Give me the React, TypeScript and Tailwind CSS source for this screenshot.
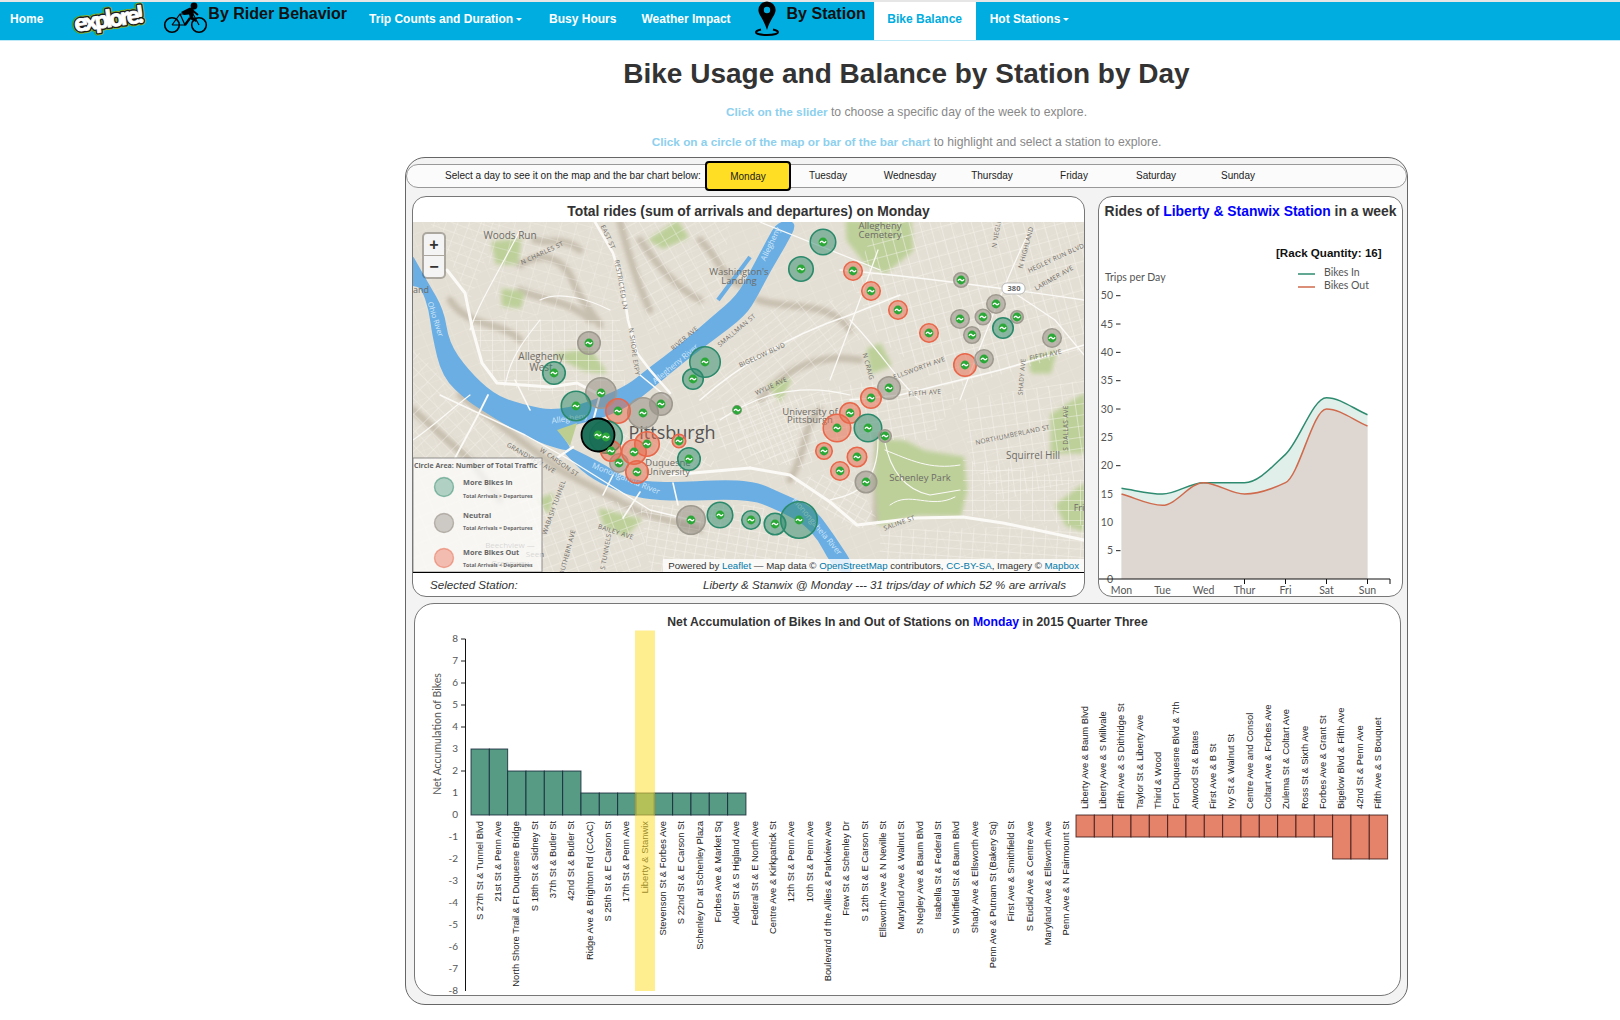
const sans = '"Liberation Sans", Arial, sans-serif'
const geo = 'Lato, "Liberation Sans", sans-serif'
const mapFont = '"Open Sans", "Liberation Sans", sans-serif'

const days = ['Monday', 'Tuesday', 'Wednesday', 'Thursday', 'Friday', 'Saturday', 'Sunday']

// kind: g = more in, n = neutral, r = more out
const stations: [number, number, number, string][] = [
  [589, 343, 12, 'n'], [554, 373, 12, 'g'], [705, 362, 16, 'g'], [693, 379, 11, 'g'], [601, 393, 16, 'n'],
  [823, 242, 13.5, 'g'], [801, 269, 13, 'g'], [853, 271, 10, 'r'], [871, 291, 10, 'r'], [898, 310, 10, 'r'],
  [929, 333, 10, 'r'], [965, 365, 12, 'r'], [984, 359, 10, 'n'], [961, 280, 8, 'n'], [996, 304, 10, 'n'],
  [960, 319, 10, 'n'], [983, 317, 8.5, 'n'], [1017, 317, 7, 'n'], [1003, 328, 11, 'g'], [972, 335, 9, 'n'],
  [1052, 338, 10, 'n'], [889, 388, 12, 'n'], [871, 398, 11, 'r'], [576, 406, 15.5, 'g'], [643, 413, 16, 'n'],
  [661, 404, 12, 'n'], [618, 411, 13, 'r'], [737, 410, 5, 'n'], [606, 437, 17, 'g'], [619, 463, 10, 'n'],
  [611, 451, 11, 'r'], [634, 452, 13, 'r'], [647, 444, 13, 'r'], [637, 472, 12, 'r'], [679, 441, 7.5, 'r'],
  [689, 459, 12, 'g'], [691, 520, 15, 'n'], [720, 515, 13.5, 'g'], [751, 520, 10, 'g'], [775, 524, 11.5, 'g'],
  [799, 520, 19, 'g'], [850, 413, 11, 'r'], [837, 428, 14.5, 'r'], [868, 428, 14.5, 'g'], [885, 436, 7, 'n'],
  [824, 451, 9, 'r'], [857, 457, 10.5, 'r'], [840, 471, 10, 'r'], [866, 482, 11.5, 'n'],
]

const stationStyle: Record<string, { fill: string; stroke: string }> = {
  g: { fill: '#2b8a6b', stroke: '#2b8a6b' },
  n: { fill: '#8d887e', stroke: '#9f9a90' },
  r: { fill: '#e8674a', stroke: '#e8674a' },
}

const blocks: { pts: string; rot: number; w: number; h: number; op?: number }[] = [
  { pts: '470,320 620,320 625,385 560,395 495,385', rot: 0, w: 12, h: 10 },
  { pts: '480,222 600,222 640,300 500,320', rot: 15, w: 15, h: 11, op: 0.55 },
  { pts: '620,222 730,222 720,300 650,340 640,280', rot: -30, w: 13, h: 10, op: 0.7 },
  { pts: '690,395 780,300 850,300 860,340 760,410', rot: -38, w: 26, h: 7, op: 0.7 },
  { pts: '700,410 830,390 810,470 690,440', rot: -20, w: 11, h: 9 },
  { pts: '850,280 880,222 1084,222 1084,350 950,390 880,340', rot: -15, w: 10, h: 14 },
  { pts: '960,400 1084,380 1084,480 1000,500 970,460', rot: -8, w: 12, h: 11 },
  { pts: '820,390 880,380 960,395 930,440 880,440 820,440', rot: -10, w: 11, h: 9 },
  { pts: '880,530 1084,525 1084,572 880,572', rot: 4, w: 12, h: 8 },
  { pts: '640,505 760,505 830,572 650,572', rot: 10, w: 10, h: 8 },
  { pts: '570,490 650,510 640,572 540,572 520,500', rot: -20, w: 12, h: 10, op: 0.8 },
  { pts: '600,430 680,440 720,465 650,478 610,460', rot: 30, w: 8, h: 8 },
  { pts: '413,345 460,400 540,460 413,460', rot: 45, w: 13, h: 11, op: 0.7 },
  { pts: '430,222 500,222 470,300', rot: 20, w: 11, h: 9, op: 0.7 },
  { pts: '790,480 850,470 880,525 850,530', rot: 30, w: 10, h: 9 },
  { pts: '963,460 1084,480 1084,525 963,515', rot: 0, w: 12, h: 10 },
  { pts: '735,400 800,395 795,465 740,465', rot: -25, w: 12, h: 10, op: 0.8 },
]

const greens = [
  '878,440 905,442 925,452 963,458 966,490 960,515 917,514 880,524 876,480',
  '847,222 910,222 912,250 885,272 866,263 848,240',
  '1057,505 1084,485 1084,530 1067,525',
  '1052,415 1084,395 1084,452 1052,452',
  '493,243 520,240 517,263 497,263',
  '650,240 677,222 687,237 663,247',
  '503,290 523,293 520,307 503,305',
  '555,355 590,350 605,372 585,370',
  '868,350 880,345 890,365 872,372',
  '770,385 790,380 780,400',
  '1030,360 1055,352 1050,372 1032,372',
  '540,500 552,495 548,512',
  '600,510 640,520 625,535 605,525',
]

const roads: [string, number][] = [
  ['M447 270L465 293L472 327L482 363L497 383L550 387L577 383L600 395', 3],
  ['M595 222L613 253L623 287L628 320L637 353L650 370L670 393', 2.6],
  ['M700 400C740 365 790 335 850 315L900 295', 1.6],
  ['M850 400L900 395L1000 370L1084 345', 1.6],
  ['M750 468L790 475L830 502L857 525L917 518L963 517L1003 523L1084 540', 3],
  ['M670 475L750 468', 3],
  ['M440 395L525 435L570 460L650 510L700 522', 1.4],
  ['M557 458L573 447', 2.4],
  ['M603 495L613 475', 1.6],
  ['M623 518L640 492', 1.6],
  ['M678 505L673 483', 1.6],
  ['M668 398L640 375', 1.6],
  ['M515 380L530 410', 1.6],
  ['M600 395L592 425L610 445', 2],
  ['M840 270C900 275 980 285 1084 300', 1.3],
  ['M878 250C860 300 845 340 830 380', 1.3],
  ['M850 320C880 350 900 385 920 400', 1.2],
  ['M1030 230C1010 270 990 320 960 400', 1.2],
  ['M1010 290L1055 320L1084 355', 1.2],
  ['M885 442C890 470 905 490 930 495L960 490', 1.2],
  ['M885 450C910 460 930 470 960 465', 1],
  ['M890 505C910 490 930 510 955 497', 1],
  ['M830 500C850 495 878 490 878 440', 1.2],
  ['M760 222L880 270', 1.2],
  ['M413 440C435 425 450 410 470 395', 1.2],
  ['M488 395L478 415L455 458', 1.8],
  ['M720 420C750 400 790 380 850 395', 1.2],
  ['M520 230C500 270 480 300 470 330', 1.2],
  ['M540 300C560 290 590 300 610 310', 1.2],
  ['M540 320C520 345 510 360 505 385', 1.2],
]

const hills = [
  'M520 265C545 250 560 260 570 275C580 300 590 310 600 325',
  'M640 240C660 270 680 290 700 300',
  'M460 395L560 470L640 512L700 530',
  'M413 410L470 460L500 500',
  'M758 300C790 310 830 300 850 330',
  'M790 480C810 445 800 430 820 410',
  'M878 440L876 520',
  'M620 222C630 260 640 290 650 310',
  'M520 290C540 300 570 300 590 320',
  'M450 300C470 330 500 320 520 340',
  'M700 240C720 260 725 280 740 285',
  'M760 400C790 360 830 355 860 360',
  'M535 240C550 245 560 235 580 250',
]

const mapLabels: [string, number, number, number, number, string?][] = [
  ['Woods Run', 510, 239, 0, 10], ['N CHARLES ST', 543, 255, -25, 6.5], ['EAST ST', 606, 238, 65, 6.5],
  ['RESTRICTED LN', 619, 285, 80, 6.5], ['N SHORE EXPY', 632, 352, 82, 6.5], ['RIVER AVE', 686, 340, -40, 6.5],
  ['SMALLMAN ST', 738, 332, -40, 6.5], ['Allegheny', 541, 360, 0, 10], ['West', 541, 371, 0, 10],
  ['and', 421, 293, 0, 9], ['Washington\'s', 739, 275, 0, 9.5], ['Landing', 739, 284, 0, 9.5],
  ['Allegheny', 880, 229, 0, 9.5], ['Cemetery', 880, 238, 0, 9.5], ['N NEGLEY', 999, 232, -80, 6.5],
  ['N HIGHLAND', 1028, 248, -75, 6.5], ['HEGLEY RUN BLVD', 1057, 260, -25, 6.5], ['LARIMER AVE', 1055, 280, -30, 6.5],
  ['N CRAIG', 866, 367, 75, 6.5], ['ELLSWORTH AVE', 920, 370, -20, 6.5], ['FIFTH AVE', 925, 395, -5, 6.5],
  ['FIFTH AVE', 1046, 357, -12, 6.5], ['SHADY AVE', 1024, 377, -85, 6.5], ['BIGELOW BLVD', 763, 357, -25, 6.5],
  ['WYLIE AVE', 772, 388, -25, 6.5], ['Duquesne', 668, 466, 0, 9.5], ['University', 668, 475, 0, 9.5],
  ['University of', 810, 415, 0, 9.5], ['Pittsburgh', 810, 423, 0, 9.5], ['NORTHUMBERLAND ST', 1013, 437, -12, 6.5],
  ['S DALLAS AVE', 1068, 428, -90, 6.5], ['Squirrel Hill', 1033, 459, 0, 10], ['Schenley Park', 920, 481, 0, 9.5],
  ['SALINE ST', 900, 525, -20, 6.5], ['Fri', 1079, 511, 0, 9], ['GRANDVIEW AVE', 530, 460, 30, 6.5],
  ['W CARSON ST', 558, 464, 35, 6.5], ['BAILEY AVE', 615, 534, 18, 6.5], ['WABASH TUNNEL', 556, 508, -70, 6.5],
  ['SOUTHERN AVE', 569, 555, -75, 6.5], ['S TUNNELS', 608, 552, -80, 6.5],
  ['Beechview —', 510, 548, 0, 8], ['Seen', 535, 557, 0, 8], ['Greenway', 510, 566, 0, 8],
  ['Ohio River', 433, 320, 72, 7.5, '#d4e8f8'], ['Allegheny River', 677, 366, -40, 8, '#d4e8f8'],
  ['Allegheny', 773, 245, -65, 8, '#d4e8f8'], ['Allegheny', 570, 421, -8, 8, '#d4e8f8'],
  ['Monongahela River', 625, 481, 22, 8, '#d4e8f8'], ['Monongahela River', 815, 528, 50, 8, '#d4e8f8'],
]

// rounds the corners of a river outline
function smooth(pts: number[][]) {
  let d = `M${pts[0][0]} ${pts[0][1]}`
  for (let i = 1; i < pts.length - 1; i++) {
    const mx = (pts[i][0] + pts[i + 1][0]) / 2
    const my = (pts[i][1] + pts[i + 1][1]) / 2
    d += `Q${pts[i][0]} ${pts[i][1]} ${mx} ${my}`
  }
  const last = pts[pts.length - 1]
  return `${d}L${last[0]} ${last[1]}Z`
}

const ohioAllegheny = smooth([
  [413, 258], [427, 283], [443, 310], [448, 343], [467, 370], [493, 395], [520, 405], [560, 413], [623, 390], [650, 368],
  [680, 346], [712, 318], [738, 296], [752, 270], [768, 240], [778, 222], [797, 222], [785, 245], [770, 270], [757, 295],
  [745, 315], [712, 340], [685, 360], [655, 385], [630, 405], [600, 418], [577, 423], [557, 430], [570, 448], [567, 450],
  [540, 442], [507, 425], [480, 408], [468, 400], [443, 377], [433, 335], [430, 310], [422, 287], [413, 285],
])
const monongahela = smooth([
  [573, 450], [600, 463], [627, 480], [653, 483], [677, 483], [750, 480], [783, 495], [813, 508], [833, 535], [857, 572],
  [836, 572], [813, 528], [780, 510], [750, 498], [677, 500], [643, 498], [617, 490], [587, 475], [565, 452],
])

function MapDrawing() {
  return (
    <svg viewBox="413 222 671 350" width={671} height={350} className="block">
      <defs>
        <filter id="soft" x="-5%" y="-5%" width="110%" height="110%">
          <feGaussianBlur stdDeviation={2.2} />
        </filter>
        <filter id="tile" x="0" y="0" width="100%" height="100%">
          <feGaussianBlur stdDeviation={0.35} />
        </filter>
        <pattern id="baseGrid" width={14} height={12} patternUnits="userSpaceOnUse" patternTransform="rotate(-22)">
          <path d="M0 0H14M0 0V12" stroke="#f5f3ee" strokeWidth={1} fill="none" />
        </pattern>
        {blocks.map((b, i) => (
          <pattern
            key={i}
            id={`blocks${i}`}
            width={b.w}
            height={b.h}
            patternUnits="userSpaceOnUse"
            patternTransform={`rotate(${b.rot})`}
          >
            <path d={`M0 0H${b.w}M0 0V${b.h}`} stroke="#f7f5f0" strokeWidth={1.1} fill="none" />
          </pattern>
        ))}
      </defs>
      <g filter="url(#tile)">
        <rect x={413} y={222} width={671} height={350} fill="#e4dfd4" />
        <rect x={413} y={222} width={671} height={350} fill="url(#baseGrid)" opacity={0.35} />
        <g filter="url(#soft)">
          {hills.map(d => (
            <path key={d} d={d} fill="none" stroke="#c6beae" strokeWidth={7} strokeLinecap="round" />
          ))}
          {greens.map(p => (
            <polygon key={p} points={p} fill="#bdd09a" stroke="#bdd09a" strokeWidth={3} strokeLinejoin="round" />
          ))}
        </g>
        {blocks.map((b, i) => (
          <polygon key={i} points={b.pts} fill={`url(#blocks${i})`} opacity={b.op ?? 0.9} />
        ))}
        {/* rivers */}
        <g fill="#6aaee4" stroke="#6aaee4" strokeWidth={2} strokeLinejoin="round">
          <path d={ohioAllegheny} />
          <path d={monongahela} />
          <path d="M718 300L750 257" strokeWidth={4} fill="none" />
        </g>
        <polygon points="557,430 577,423 570,446" fill="#bccf91" />
        {roads.map(([d, w]) => (
          <path key={d} d={d} fill="none" stroke="#fbfaf7" strokeWidth={w} strokeLinejoin="round" strokeLinecap="round" />
        ))}
      </g>
      <rect x={1002} y={283} width={23} height={11} rx={5} fill="#fff" stroke="#aaa" strokeWidth={0.8} />
      <text x={1014} y={291} fontSize={7.5} fontWeight={700} fill="#666" textAnchor="middle" fontFamily={mapFont}>380</text>
      {mapLabels.map(([t, x, y, rot, size, color], i) => (
        <text
          key={i}
          x={x}
          y={y}
          fontSize={size}
          fill={color ?? '#6e6b66'}
          fontFamily={mapFont}
          textAnchor="middle"
          letterSpacing={size < 7 ? 0.3 : 0}
          transform={rot ? `rotate(${rot} ${x} ${y})` : undefined}
        >
          {t}
        </text>
      ))}
      <text x={672} y={439} fontSize={18} fill="#555" textAnchor="middle" fontFamily={mapFont}>Pittsburgh</text>
      {stations.map(([x, y, r, k], i) => (
        <circle key={i} cx={x} cy={y} r={r - 0.75} fill={stationStyle[k].fill} fillOpacity={0.5} stroke={stationStyle[k].stroke} strokeWidth={1.6} />
      ))}
      <circle cx={598} cy={435} r={16.5} fill="#146b52" fillOpacity={0.95} stroke="#000" strokeWidth={1.8} />
      {[...stations, [598, 435, 17, 'g'] as [number, number, number, string]].map(([x, y, r], i) => (
        <g key={i}>
          <circle cx={x} cy={y} r={Math.min(4.4, r - 0.5)} fill="#2ca838" />
          <path d={`M${x - 3} ${y + 0.8}q1.4 -2.6 3 -0.8t3 -0.8`} fill="none" stroke="#fff" strokeWidth={1.3} />
        </g>
      ))}
      {/* legend */}
      <rect x={413} y={458} width={129} height={114} fill="#fff" fillOpacity={0.72} stroke="#777" strokeWidth={0.8} />
      <g fontFamily={mapFont} fill="#666" fontWeight={700}>
        <text x={414} y={468} fontSize={7}>Circle Area: Number of Total Traffic</text>
        <text x={463} y={485} fontSize={7.3}>More Bikes In</text>
        <text x={463} y={498} fontSize={5.2}>Total Arrivals &gt; Departures</text>
        <text x={463} y={518} fontSize={7.3}>Neutral</text>
        <text x={463} y={530} fontSize={5.2}>Total Arrivals = Departures</text>
        <text x={463} y={555} fontSize={7.3}>More Bikes Out</text>
        <text x={463} y={567} fontSize={5.2}>Total Arrivals &lt; Departures</text>
      </g>
      <circle cx={444} cy={487} r={9.5} fill="#2b8a6b" fillOpacity={0.35} stroke="#2b8a6b" strokeOpacity={0.5} strokeWidth={1.4} />
      <circle cx={444} cy={523} r={9.5} fill="#8d887e" fillOpacity={0.4} stroke="#9f9a90" strokeOpacity={0.7} strokeWidth={1.4} />
      <circle cx={444} cy={558} r={9.5} fill="#e8674a" fillOpacity={0.4} stroke="#e8674a" strokeOpacity={0.5} strokeWidth={1.4} />
    </svg>
  )
}

function monotonePath(xs: number[], ys: number[]) {
  const n = xs.length
  const d: number[] = []
  for (let i = 0; i < n - 1; i++) d.push((ys[i + 1] - ys[i]) / (xs[i + 1] - xs[i]))
  const m = xs.map((_, i) => {
    if (i === 0) return d[0]
    if (i === n - 1) return d[n - 2]
    if (d[i - 1] * d[i] <= 0) return 0
    return (2 * d[i - 1] * d[i]) / (d[i - 1] + d[i])
  })
  let path = `M${xs[0]} ${ys[0]}`
  for (let i = 0; i < n - 1; i++) {
    const h = (xs[i + 1] - xs[i]) / 3
    path += `C${xs[i] + h} ${ys[i] + m[i] * h} ${xs[i + 1] - h} ${ys[i + 1] - m[i + 1] * h} ${xs[i + 1]} ${ys[i + 1]}`
  }
  return path
}

function LineChart() {
  const xs = days.map((_, i) => 1121.5 + 41 * i)
  const y = (v: number) => 579 - 5.666 * v
  const bikesIn = [16, 15, 17, 17, 22, 32, 29].map(y)
  const bikesOut = [15, 13, 17, 15, 17, 30, 27].map(y)
  const lineIn = monotonePath(xs, bikesIn)
  const lineOut = monotonePath(xs, bikesOut)
  const close = `L${xs[6]} 579L${xs[0]} 579Z`
  return (
    <svg viewBox="1099 223 303 373" width={303} height={373} className="block">
      <path d={lineIn + close} fill="#2e8b6f" fillOpacity={0.14} />
      <path d={lineOut + close} fill="#ded6d1" />
      <path d={lineIn} fill="none" stroke="#2e8b6f" strokeWidth={1.5} />
      <path d={lineOut} fill="none" stroke="#cf6a4c" strokeWidth={1.5} />
      <text x={1276} y={257} fontSize={11.6} fontWeight={700} fill="#111" fontFamily={sans}>[Rack Quantity: 16]</text>
      <g fontFamily={geo} fill="#555" fontSize={10.5}>
        <text x={1105} y={281}>Trips per Day</text>
        <text x={1324} y={276}>Bikes In</text>
        <text x={1324} y={289}>Bikes Out</text>
        {[50, 45, 40, 35, 30, 25, 20, 15, 10, 5, 0].map(v => (
          <text key={v} x={1113} y={y(v) + 3.5} textAnchor="end">{v}</text>
        ))}
        {['Mon', 'Tue', 'Wed', 'Thur', 'Fri', 'Sat', 'Sun'].map((d, i) => (
          <text key={d} x={xs[i]} y={594} textAnchor="middle">{d}</text>
        ))}
      </g>
      <path d="M1298 274H1315" stroke="#2e8b6f" strokeWidth={1.5} />
      <path d="M1298 287H1315" stroke="#cf6a4c" strokeWidth={1.5} />
      {[50, 45, 40, 35, 30, 20, 5].map(v => (
        <path key={v} d={`M1116 ${y(v)}H1120.5`} stroke="#222" />
      ))}
      <path d="M1099 579H1390" stroke="#111" />
      {[xs[3], xs[4], xs[5], xs[6], 1390].map(x => (
        <path key={x} d={`M${x} 579V584`} stroke="#111" />
      ))}
    </svg>
  )
}

const positive = [
  'S 27th St & Tunnel Blvd', '21st St & Penn Ave', 'North Shore Trail & Ft Duquesne Bridge', 'S 18th St & Sidney St',
  '37th St & Butler St', '42nd St & Butler St', 'Ridge Ave & Brighton Rd (CCAC)', 'S 25th St & E Carson St',
  '17th St & Penn Ave', 'Liberty & Stanwix', 'Stevenson St & Forbes Ave', 'S 22nd St & E Carson St',
  'Schenley Dr at Schenley Plaza', 'Forbes Ave & Market Sq', 'Alder St & S Higland Ave', 'Federal St & E North Ave',
  'Centre Ave & Kirkpatrick St', '12th St & Penn Ave', '10th St & Penn Ave', 'Boulevard of the Allies & Parkview Ave',
  'Frew St & Schenley Dr', 'S 12th St & E Carson St', 'Ellsworth Ave & N Neville St', 'Maryland Ave & Walnut St',
  'S Negley Ave & Baum Blvd', 'Isabella St & Federal St', 'S Whitfield St & Baum Blvd', 'Shady Ave & Ellsworth Ave',
  'Penn Ave & Putnam St (Bakery Sq)', 'First Ave & Smithfield St', 'S Euclid Ave & Centre Ave',
  'Maryland Ave & Ellsworth Ave', 'Penn Ave & N Fairmount St',
]
const negative = [
  'Liberty Ave & Baum Blvd', 'Liberty Ave & S Millvale', 'Fifth Ave & S Dithridge St', 'Taylor St & Liberty Ave',
  'Third & Wood', 'Fort Duquesne Blvd & 7th', 'Atwood St & Bates', 'First Ave & B St', 'Ivy St & Walnut St',
  'Centre Ave and Consol', 'Coltart Ave & Forbes Ave', 'Zulema St & Coltart Ave', 'Ross St & Sixth Ave',
  'Forbes Ave & Grant St', 'Bigelow Blvd & Fifth Ave', '42nd St & Penn Ave', 'Fifth Ave & S Bouquet',
]
const posValues = [3, 3, 2, 2, 2, 2, 1, 1, 1, 1, 1, 1, 1, 1, 1]
const step = 18.33
const zero = 815

function BarChart() {
  return (
    <svg viewBox="415 630 985 365" width={985} height={365} className="block">
      {Array.from({ length: 17 }, (_, i) => 8 - i).map(v => (
        <text key={v} x={458} y={zero - v * 22 + 2.5} textAnchor="end" fontSize={10} fontFamily={geo} fill="#555">{v}</text>
      ))}
      {[8, 7, 6, 5, 4, 2].map(v => (
        <path key={v} d={`M461 ${zero - v * 22}H465.5`} stroke="#222" />
      ))}
      <path d="M465.5 639V991" stroke="#111" />
      <text
        x={441}
        y={734}
        fontSize={10.5}
        fontFamily={geo}
        fill="#555"
        textAnchor="middle"
        transform="rotate(-90 441 734)"
      >
        Net Accumulation of Bikes
      </text>
      {posValues.map((v, i) => (
        <rect key={i} x={471 + i * step} y={zero - v * 22} width={step} height={v * 22} fill="#579b85" stroke="#123" strokeOpacity={0.8} />
      ))}
      {negative.map((_, i) => (
        <rect key={i} x={1076 + i * step} y={zero} width={step} height={i >= 14 ? 44 : 22} fill="#e5826a" stroke="#311" strokeOpacity={0.8} />
      ))}
      <g fontFamily={sans} fontSize={9.4} fill="#222">
        {positive.map((t, i) => {
          const x = 471 + i * step + step / 2 + 2.5
          return (
            <text key={t} x={x} y={821} textAnchor="end" transform={`rotate(-90 ${x} 821)`}>{t}</text>
          )
        })}
        {negative.map((t, i) => {
          const x = 1076 + i * step + step / 2 + 2.5
          return (
            <text key={t} x={x} y={809} transform={`rotate(-90 ${x} 809)`}>{t}</text>
          )
        })}
      </g>
      <rect x={635} y={630.5} width={20} height={360.5} fill="#ffe033" fillOpacity={0.55} />
    </svg>
  )
}

function ExploreLogo() {
  return (
    <svg width={84} height={36} viewBox="0 0 84 36" className="shrink-0">
      <g transform="rotate(-8 42 18)" fontFamily={geo} fontWeight={900} fontSize={24} strokeLinejoin="round">
        <text x={7} y={26} fill="none" stroke="#7fae2c" strokeWidth={5.4} textLength={70}>explore!</text>
        <text x={7} y={26} fill="none" stroke="#1c1c1c" strokeWidth={3.6} textLength={70}>explore!</text>
        <text x={7} y={26} fill="#fff" stroke="#fff" strokeWidth={0.8} textLength={70}>explore!</text>
      </g>
    </svg>
  )
}

function BikeIcon() {
  return (
    <svg width={45} height={36} viewBox="0 0 45 36" className="shrink-0">
      <g fill="none" stroke="#000" strokeWidth={1.6}>
        <circle cx={9} cy={25} r={7.3} />
        <circle cx={36} cy={25} r={7.3} />
        <path d="M9 25L17 14L30 14L36 25M17 14L22 25L30 14M22 25H9" strokeWidth={1.2} />
      </g>
      <circle cx={31} cy={6} r={3.4} />
      <path d="M18 12L26 8C29 7 31 9 31 11L30 17L34 20L33 22L27 19L26 14L21 15Z" />
      <path d="M27 18L22 25" stroke="#000" strokeWidth={2.4} />
      <path d="M29 10L35 15" stroke="#000" strokeWidth={2} />
    </svg>
  )
}

function PinIcon() {
  return (
    <svg width={26} height={38} viewBox="0 0 26 38" className="shrink-0">
      <path fillRule="evenodd" d="M13 1.5a8.6 8.6 0 0 1 8.6 8.6c0 5-5.5 9-8.6 20c-3.1-11-8.6-15-8.6-20A8.6 8.6 0 0 1 13 1.5ZM13 6.8a3.2 3.2 0 1 0 0 6.4a3.2 3.2 0 0 0 0-6.4Z" />
      <path d="M7 29.5C3.5 30.3 2 31.2 2 32.3C2 34 7 35 13 35S24 34 24 32.3C24 31.2 22.5 30.3 19 29.5" fill="none" stroke="#000" strokeWidth={2} />
    </svg>
  )
}

function Caret() {
  return <span className="ml-[3px] inline-block border-x-[3px] border-t-[3px] border-x-transparent border-t-white align-middle" />
}

const navLink = 'mb-[4px] text-[12px] font-bold text-white whitespace-nowrap'
const navHead = 'mb-[14px] text-[16px] leading-[18px] font-bold text-[#111] whitespace-nowrap'

function Nav() {
  return (
    <nav className="flex h-[41px] items-center border-t-2 border-b border-t-[#e6e6e6] border-b-[#bfe9f6] bg-[#00ade0]">
      <a className={`${navLink} ml-[10px]`}>Home</a>
      <div className="mb-[4px] ml-[24px]"><ExploreLogo /></div>
      <div className="mb-[6px] ml-[12px]"><BikeIcon /></div>
      <a className={navHead}>By Rider Behavior</a>
      <a className={`${navLink} ml-[22px]`}>Trip Counts and Duration<Caret /></a>
      <a className={`${navLink} ml-[27px]`}>Busy Hours</a>
      <a className={`${navLink} ml-[25px]`}>Weather Impact</a>
      <div className="mb-[4px] ml-[23px]"><PinIcon /></div>
      <a className={`${navHead} ml-[7px]`}>By Station</a>
      <a className="ml-[8px] flex h-full w-[102px] items-center justify-center bg-white pb-[4px] text-[12px] font-bold whitespace-nowrap text-[#00ade0]">Bike Balance</a>
      <a className={`${navLink} ml-[14px]`}>Hot Stations<Caret /></a>
    </nav>
  )
}

function Attribution() {
  const link = 'text-[#0078a8]'
  return (
    <div className="absolute right-0 bottom-0 bg-white/80 px-[5px] text-[9.7px] leading-[13px] whitespace-nowrap text-[#333]">
      Powered by <a className={link}>Leaflet</a> — Map data © <a className={link}>OpenStreetMap</a> contributors,{' '}
      <a className={link}>CC-BY-SA</a>, Imagery © <a className={link}>Mapbox</a>
    </div>
  )
}

function ZoomControl() {
  return (
    <div className="absolute top-[10px] left-[9px] flex w-[24px] flex-col gap-[1px] rounded-[5px] bg-black/25 p-[2px]">
      <div className="flex h-[21px] items-center justify-center rounded-t-[3px] bg-[#f4f4f4] text-[16px] leading-none font-bold text-[#333]">+</div>
      <div className="flex h-[21px] items-center justify-center rounded-b-[3px] bg-[#f4f4f4] text-[16px] leading-none font-bold text-[#333]">−</div>
    </div>
  )
}

export default function App() {
  return (
    <div className="w-[1620px] bg-white text-[#333]" style={{ fontFamily: sans }}>
      <Nav />
      <h1 className="mt-[17px] ml-[405px] w-[1003px] text-center text-[28px] leading-[32px] font-bold text-[#333]">
        Bike Usage and Balance by Station by Day
      </h1>
      <p className="mt-[14px] ml-[405px] w-[1003px] text-center text-[12.2px] leading-[16px] text-[#888]">
        <span className="text-[11.8px] font-bold text-[#8dd0ee]">Click on the slider</span> to choose a specific day of the week to explore.
      </p>
      <p className="mt-[14px] ml-[405px] w-[1003px] text-center text-[12.2px] leading-[16px] text-[#888]">
        <span className="text-[11.8px] font-bold text-[#8dd0ee]">Click on a circle of the map or bar of the bar chart</span> to highlight and select a station to explore.
      </p>
      <main className="mt-[7px] ml-[405px] w-[1003px] rounded-[20px] border border-[#666] bg-[#f3f3f3] pt-[6px] pb-[8px]">
        <div className="flex h-[24px] items-center rounded-[12px] border border-[#999] bg-[#fbfbfb] pb-[1px] pl-[38px] text-[10px]">
          <span className="w-[260px] whitespace-nowrap text-[#222]">Select a day to see it on the map and the bar chart below:</span>
          {days.map((d, i) =>
            i === 0 ? (
              <button key={d} className="mt-[1px] mr-[-4px] h-[30px] w-[86px] shrink-0 rounded-[4px] border-2 border-black bg-[#ffde23] text-[10px] text-[#222]">{d}</button>
            ) : (
              <button key={d} className="w-[82px] shrink-0 text-[10px] text-[#222]">{d}</button>
            )
          )}
        </div>
        <div className="mt-[8px] ml-[6px] flex gap-[13px]">
          <section className="w-[673px] overflow-hidden rounded-[14px] border border-[#777] bg-white">
            <h2 className="flex h-[25px] items-center justify-center pt-[3px] text-[13.9px] font-bold text-[#333]">
              Total rides (sum of arrivals and departures) on Monday
            </h2>
            <div className="relative h-[350px]">
              <MapDrawing />
              <ZoomControl />
              <Attribution />
            </div>
            <div className="flex h-[23px] items-center justify-between border-t border-black pt-[1px] pr-[18px] pl-[17px] text-[11.6px] text-[#333] italic">
              <span>Selected Station:</span>
              <span>Liberty &amp; Stanwix @ Monday --- 31 trips/day of which 52 % are arrivals</span>
            </div>
          </section>
          <section className="w-[305px] overflow-hidden rounded-[14px] border border-[#777] bg-white">
            <h2 className="flex h-[26px] items-center justify-center pt-[3px] text-[13.9px] font-bold whitespace-nowrap text-[#333]">
              Rides of&nbsp;<span className="text-[#0000ff]">Liberty &amp; Stanwix Station</span>&nbsp;in a week
            </h2>
            <LineChart />
          </section>
        </div>
        <section className="mt-[6px] ml-[8px] w-[987px] overflow-hidden rounded-[20px] border border-[#777] bg-white">
          <h2 className="flex h-[26px] items-end justify-center text-[12.2px] leading-[16px] font-bold text-[#333]">
            Net Accumulation of Bikes In and Out of Stations on&nbsp;<span className="text-[#0000ff]">Monday</span>&nbsp;in 2015 Quarter Three
          </h2>
          <BarChart />
        </section>
      </main>
    </div>
  )
}
